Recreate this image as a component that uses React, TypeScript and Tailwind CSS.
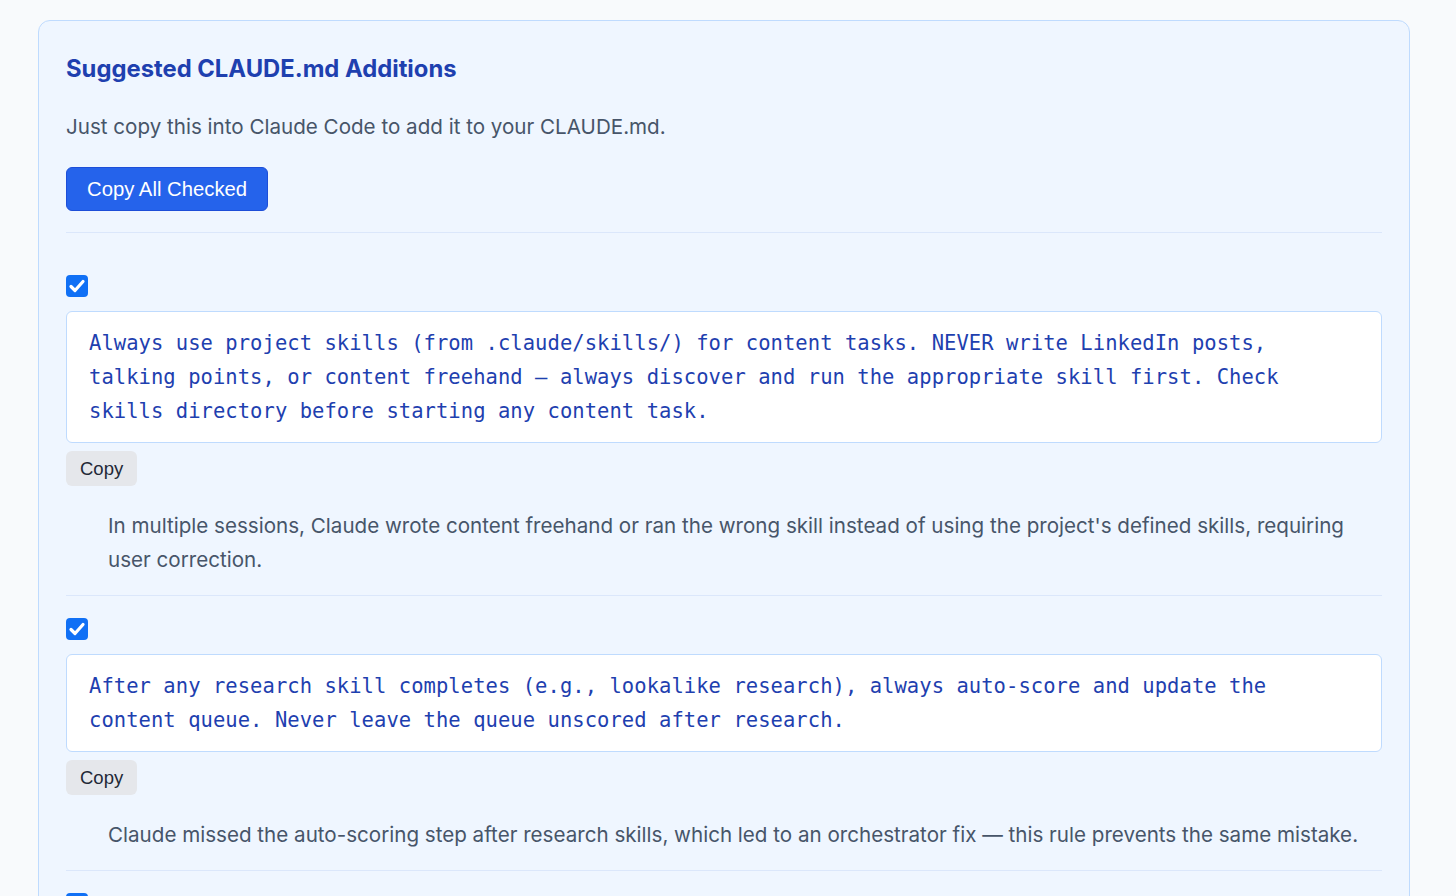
const items = [
  {
    rule: 'Always use project skills (from .claude/skills/) for content tasks. NEVER write LinkedIn posts, talking points, or content freehand — always discover and run the appropriate skill first. Check skills directory before starting any content task.',
    reason:
      "In multiple sessions, Claude wrote content freehand or ran the wrong skill instead of using the project's defined skills, requiring user correction.",
  },
  {
    rule: 'After any research skill completes (e.g., lookalike research), always auto-score and update the content queue. Never leave the queue unscored after research.',
    reason:
      'Claude missed the auto-scoring step after research skills, which led to an orchestrator fix — this rule prevents the same mistake.',
  },
  {
    rule: 'When a task is finished, summarize what changed and which files were touched before moving on.',
    reason: 'Users repeatedly asked for a recap of changes at the end of long sessions.',
  },
];

function CheckMark() {
  return (
    <span className="flex h-[22px] w-[22px] items-center justify-center rounded-[4px] bg-[#1070f5]">
      <svg viewBox="0 0 22 22" className="h-[22px] w-[22px]" fill="none">
        <path d="M5 11.5 9 15.5 17 6.5" stroke="white" strokeWidth="3.2" strokeLinecap="round" strokeLinejoin="round" />
      </svg>
    </span>
  );
}

function Addition({ rule, reason }: { rule: string; reason: string }) {
  return (
    <div className="border-b border-[#dbe7fb] pt-[22px] pb-[18px]">
      <CheckMark />
      <div className="mt-[14px] rounded-[6px] border border-[#bfdbfe] bg-white px-[22px] py-[14px] font-['DejaVu_Sans_Mono',monospace] text-[20.5px] leading-[34px] tracking-[0.05px] text-[#1e40af]">
        {rule}
      </div>
      <button className="mt-[8px] h-[35px] rounded-[6px] bg-[#e5e7eb] px-[14px] font-['Liberation_Sans',Arial,sans-serif] text-[18.5px] text-[#1f2937]">
        Copy
      </button>
      <p className="mt-[23px] pl-[42px] pr-[20px] text-[20.6px] leading-[34px] text-[#475569]">{reason}</p>
    </div>
  );
}

export default function App() {
  return (
    <div className="min-h-screen bg-[#f8fafc] pl-[38px] pr-[46px] pt-[20px] font-['Inter',sans-serif]">
      <div className="rounded-[12px] border border-[#bfdbfe] bg-[#eff6ff] px-[27px] pt-[28px] pb-[20px]">
        <div className="border-b border-[#dbe7fb] pb-[21px]">
          <h2 className="text-[23.8px] leading-[40px] font-bold text-[#1e40af]">Suggested CLAUDE.md Additions</h2>
          <p className="mt-[21px] text-[20.6px] leading-[34px] text-[#475569]">
            Just copy this into Claude Code to add it to your CLAUDE.md.
          </p>
          <button className="mt-[23px] h-[44px] rounded-[6px] border border-[#1d4ed8] bg-[#2563eb] px-[20px] font-['Liberation_Sans',Arial,sans-serif] text-[20.3px] text-white">
            Copy All Checked
          </button>
        </div>
        <div className="pt-[20px]">
          {items.map((it, i) => (
            <Addition key={i} rule={it.rule} reason={it.reason} />
          ))}
        </div>
      </div>
    </div>
  );
}
